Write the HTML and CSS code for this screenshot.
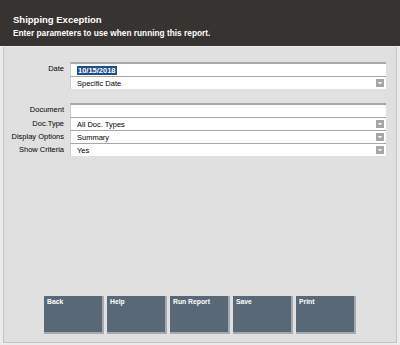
FILE: index.html
```html
<!DOCTYPE html>
<html>
<head>
<meta charset="utf-8">
<link rel="stylesheet" href="styles.css">
</head>
<body>
<div class="app">
  <header class="hdr">
    <div class="title">Shipping Exception</div>
    <div class="sub">Enter parameters to use when running this report.</div>
  </header>
  <main class="panel">
    <div class="form">
      <div class="row row-date">
        <div class="lbl">Date</div>
        <div class="stack">
          <div class="field input"><span class="selected">10/15/2018</span></div>
          <div class="field select"><span>Specific Date</span><svg class="drop" width="8" height="8" viewBox="0 0 8 8"><rect width="8" height="8" fill="#a6a6a6"/><rect x="2" y="3" width="4" height="1" fill="#ececec"/><rect x="3" y="4" width="2" height="1" fill="#ececec"/></svg></div>
        </div>
      </div>
      <div class="row row-doc">
        <div class="lbl">Document</div>
        <div class="field input"></div>
      </div>
      <div class="row">
        <div class="lbl">Doc.Type</div>
        <div class="field select"><span>All Doc. Types</span><svg class="drop" width="8" height="8" viewBox="0 0 8 8"><rect width="8" height="8" fill="#a6a6a6"/><rect x="2" y="3" width="4" height="1" fill="#ececec"/><rect x="3" y="4" width="2" height="1" fill="#ececec"/></svg></div>
      </div>
      <div class="row">
        <div class="lbl">Display Options</div>
        <div class="field select"><span>Summary</span><svg class="drop" width="8" height="8" viewBox="0 0 8 8"><rect width="8" height="8" fill="#a6a6a6"/><rect x="2" y="3" width="4" height="1" fill="#ececec"/><rect x="3" y="4" width="2" height="1" fill="#ececec"/></svg></div>
      </div>
      <div class="row">
        <div class="lbl">Show Criteria</div>
        <div class="field select"><span>Yes</span><svg class="drop" width="8" height="8" viewBox="0 0 8 8"><rect width="8" height="8" fill="#a6a6a6"/><rect x="2" y="3" width="4" height="1" fill="#ececec"/><rect x="3" y="4" width="2" height="1" fill="#ececec"/></svg></div>
      </div>
    </div>
    <div class="buttons">
      <div class="btn">Back</div>
      <div class="btn">Help</div>
      <div class="btn">Run Report</div>
      <div class="btn">Save</div>
      <div class="btn">Print</div>
    </div>
  </main>
</div>
</body>
</html>
```

FILE: styles.css
```css
html, body {
  margin: 0;
  padding: 0;
}
body {
  background: #ececec;
  font-family: "Liberation Sans", Arial, sans-serif;
}
.app {
  width: 400px;
  height: 345px;
  display: flex;
  flex-direction: column;
}
.hdr {
  height: 46px;
  box-sizing: border-box;
  background: #363330;
  color: #ffffff;
  padding: 14px 0 0 13px;
  font-weight: bold;
}
.title {
  font-size: 9.5px;
  line-height: 11px;
}
.sub {
  font-size: 8.3px;
  line-height: 10px;
  margin-top: 3px;
}
.panel {
  flex: 1;
  margin: 1px 3px 2px 3px;
  border: 1px solid #c4c4c4;
  border-top: none;
  background: #e0e0e0;
  display: flex;
  flex-direction: column;
  padding-top: 15px;
}
.row {
  display: grid;
  grid-template-columns: 60px 316px;
  column-gap: 6px;
  align-items: start;
}
.row-doc {
  margin-top: 14px;
}
.lbl {
  font-size: 7.5px;
  line-height: 13px;
  text-align: right;
  color: #000;
  white-space: nowrap;
}
.row-date .lbl {
  line-height: 14px;
}
.stack {
  display: flex;
  flex-direction: column;
}
.field {
  box-sizing: border-box;
  background: #ffffff;
  border-top: 1px solid #a8a8a8;
  border-left: 1px solid #cdcdcd;
  display: flex;
  align-items: center;
  padding-left: 6px;
  font-size: 7.5px;
  color: #000;
}
.field.input {
  height: 14px;
  border-top: 2px solid #a8a8a8;
}
.field.select {
  height: 13px;
}
.selected {
  background: #1f4d8c;
  color: #ffffff;
  font-weight: bold;
  padding: 0 1px;
  line-height: 9px;
}
.drop {
  margin-left: auto;
  margin-right: 2px;
  display: block;
}
.buttons {
  margin-top: auto;
  padding-bottom: 8px;
  display: flex;
  justify-content: center;
  gap: 3px;
}
.btn {
  width: 60px;
  height: 38px;
  box-sizing: border-box;
  background: #596877;
  border-right: 2px solid #a4aaaf;
  border-bottom: 2px solid #a4aaaf;
  color: #ffffff;
  font-weight: bold;
  font-size: 6.8px;
  line-height: 8px;
  padding: 2px 0 0 3px;
}
```
